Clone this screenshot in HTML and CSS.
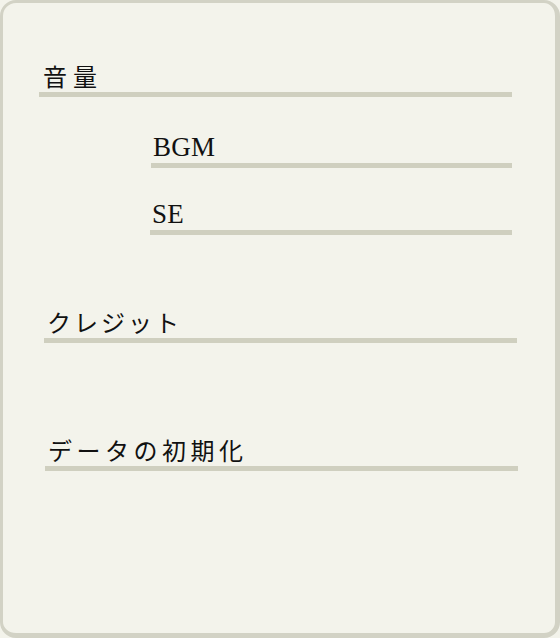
FILE: index.html
```html
<!DOCTYPE html>
<html lang="ja">
<head>
<meta charset="utf-8">
<title>設定</title>
<link rel="stylesheet" href="styles.css">
</head>
<body>
<div class="panel">
  <div class="item item-volume"><span class="label jp wide">音量</span></div>
  <div class="item sub sub-bgm"><span class="label en">BGM</span></div>
  <div class="item sub sub-se"><span class="label en">SE</span></div>
  <div class="item item-credit"><span class="label jp narrow">クレジット</span></div>
  <div class="item item-reset"><span class="label jp">データの初期化</span></div>
</div>
</body>
</html>
```
FILE: styles.css
```css
html, body {
  margin: 0;
  padding: 0;
  background: #f3f3eb;
}
.panel {
  box-sizing: border-box;
  width: 560px;
  height: 638px;
  background: #f3f3eb;
  border-style: solid;
  border-color: #d2d2c5;
  border-width: 3px 5px 5px 3px;
  border-radius: 16px;
  display: flex;
  flex-direction: column;
  align-items: flex-start;
}
.item {
  box-sizing: border-box;
  border-bottom: 5px solid #cfcfbf;
  height: 33px;
  line-height: 24px;
  padding-bottom: 4px;
  padding-left: 4px;
  color: #111;
}
.label.jp {
  font-family: "Noto Sans CJK JP", "Liberation Serif", sans-serif;
  font-size: 24px;
  letter-spacing: 4.5px;
}
.label.jp.wide {
  letter-spacing: 6px;
}
.label.jp.narrow {
  letter-spacing: 3px;
}
.label.en {
  font-family: "Liberation Serif", serif;
  font-size: 27px;
  letter-spacing: 0.3px;
}
.item-volume {
  margin-top: 61px;
  margin-left: 36px;
  width: 473px;
}
.sub {
  margin-left: 148px;
  width: 361px;
  padding-left: 2px;
}
.sub-bgm {
  margin-top: 38px;
}
.sub-se {
  margin-top: 34px;
  margin-left: 147px;
  width: 362px;
}
.item-credit {
  margin-top: 75px;
  margin-left: 41px;
  width: 473px;
  padding-left: 3px;
}
.item-reset {
  margin-top: 95px;
  margin-left: 42px;
  width: 473px;
  padding-left: 3px;
}
```
